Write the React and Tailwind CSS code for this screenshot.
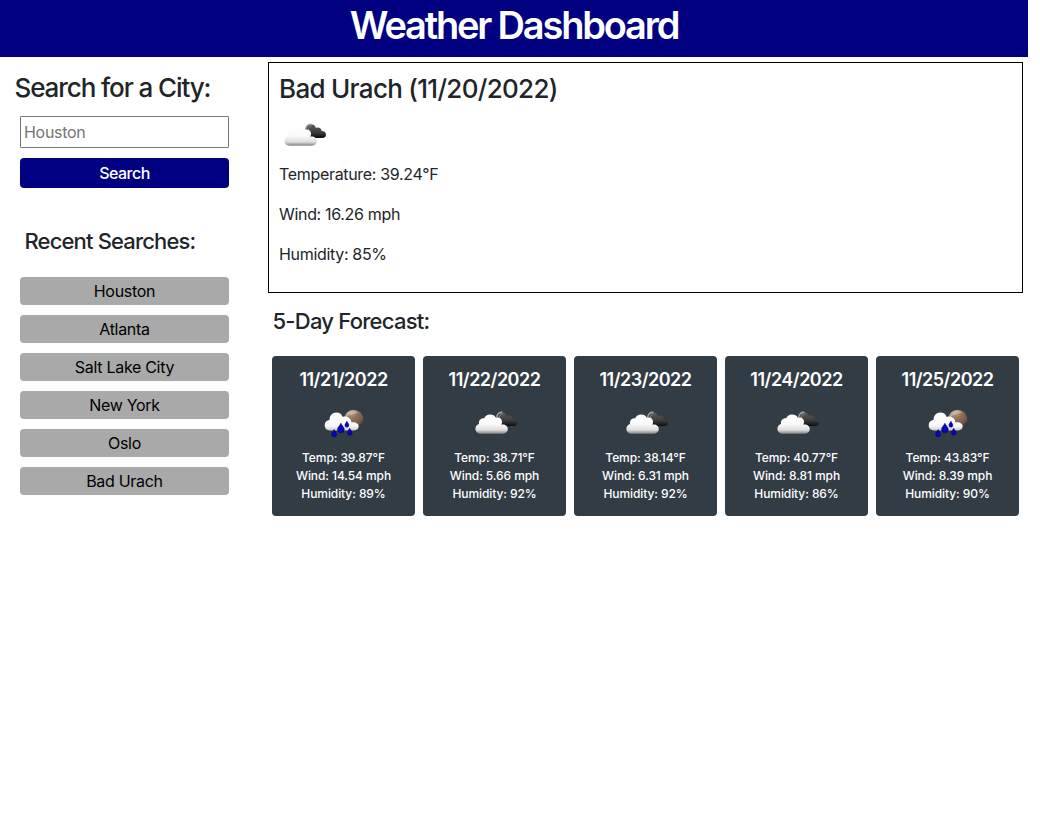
import React from "react";

const searches = ["Houston", "Atlanta", "Salt Lake City", "New York", "Oslo", "Bad Urach"];

const days = [
  { date: "11/21/2022", icon: "rain", temp: "39.87", wind: "14.54", humidity: 89 },
  { date: "11/22/2022", icon: "clouds", temp: "38.71", wind: "5.66", humidity: 92 },
  { date: "11/23/2022", icon: "clouds", temp: "38.14", wind: "6.31", humidity: 92 },
  { date: "11/24/2022", icon: "clouds", temp: "40.77", wind: "8.81", humidity: 86 },
  { date: "11/25/2022", icon: "rain", temp: "43.83", wind: "8.39", humidity: 90 },
];

function CloudsIcon({ id }) {
  return (
    <svg viewBox="0 0 50 50" className="block h-[50px] w-[50px]">
      <defs>
        <linearGradient id={id + "w"} x1="0" y1="0" x2="0" y2="1">
          <stop offset="0" stopColor="#ffffff" />
          <stop offset="0.5" stopColor="#fafafa" />
          <stop offset="0.8" stopColor="#dedede" />
          <stop offset="1" stopColor="#858585" />
        </linearGradient>
        <linearGradient id={id + "d"} x1="0" y1="0" x2="0" y2="1">
          <stop offset="0" stopColor="#5c5c5c" />
          <stop offset="0.6" stopColor="#3c3c3c" />
          <stop offset="1" stopColor="#0c0c0c" />
        </linearGradient>
      </defs>
      <path d="M27 23 C26 18.5 28.5 15.2 32 15.2 C34.6 15.2 36.4 16.8 37.1 18.9 C39.8 17.7 42.4 19.3 42.6 22 C45.4 21.9 47 23.7 47 25.7 C47 27.8 45.4 29 43.4 29 H32 Z" fill={`url(#${id}d)`} />
      <path d="M26.6 20.5 C26.8 17.3 29.2 15 32.4 15.3" fill="none" stroke="#a8a8a8" strokeWidth="1.3" />
      <path d="M29.4 20.6 C29.4 18.4 30.8 17 32.8 17" fill="none" stroke="#8c8c8c" strokeWidth="0.8" />
      <path d="M10.5 36.7 C7.3 36.7 5.4 34.7 5.4 32 C5.4 29.4 6.8 27.6 9 26.9 C8.5 23.4 11 21 14 21.4 C15.2 18.9 17.3 17.5 20 17.5 C22.8 17.5 24.9 18.7 26 20.8 C29.4 19.9 32.2 22 32 25.2 C32 26.2 31.7 27 31.3 27.7 C34.9 27 37.8 29.2 37.8 32.1 C37.8 34.9 35.8 36.7 32.8 36.7 Z" fill={`url(#${id}w)`} />
    </svg>
  );
}

function RainIcon({ id }) {
  return (
    <svg viewBox="0 0 50 50" className="block h-[50px] w-[50px]">
      <defs>
        <radialGradient id={id + "m"} cx="0.38" cy="0.12" r="0.9">
          <stop offset="0" stopColor="#c5aa98" />
          <stop offset="0.35" stopColor="#94745f" />
          <stop offset="0.75" stopColor="#765846" />
          <stop offset="1" stopColor="#3c2a20" />
        </radialGradient>
        <linearGradient id={id + "w"} x1="0" y1="0" x2="0" y2="1">
          <stop offset="0" stopColor="#ffffff" />
          <stop offset="0.75" stopColor="#f8f8f8" />
          <stop offset="1" stopColor="#c8c8c8" />
        </linearGradient>
      </defs>
      <circle cx="34.6" cy="22.4" r="9.6" fill={`url(#${id}m)`} />
      <path d="M26.5 17.9 C29 13.8 35 12.2 39.2 15.5 C36 17 30 17 27.5 20.9 Z" fill="#d7c3b6" opacity="0.6" />
      <path d="M11 33.4 C7.6 33.4 5.7 31 5.7 28.2 C5.7 25.2 7.7 23.2 10.5 23.1 C10.4 18.7 13.5 15.6 17.3 15.6 C20.3 15.6 22.7 17.1 23.7 20 C27.8 18.6 31.9 21 32.4 25.3 C36.6 24.7 39.7 26.5 39.7 29.3 C39.7 31.9 37.8 33.4 34.9 33.4 Z" fill={`url(#${id}w)`} />
      <g fill="#0606b4" stroke="#000073" strokeWidth="0.5">
        <path d="M15.1 32.6 C16 34.4 17.6 35.7 17.6 37.4 A2.5 2.5 0 0 1 12.6 37.4 C12.6 35.7 14.2 34.4 15.1 32.6 Z" />
        <path d="M21.9 26.2 C23 28.6 25.3 30.2 25.3 32.4 A3.4 3.4 0 0 1 18.5 32.4 C18.5 30.2 20.8 28.6 21.9 26.2 Z" />
        <path d="M27.9 24.2 C28.6 25.8 29.9 26.8 29.9 28.2 A2 2 0 0 1 25.9 28.2 C25.9 26.8 27.2 25.8 27.9 24.2 Z" />
        <path d="M30.7 31.3 C31.6 33.1 33.1 34.2 33.1 35.8 A2.4 2.4 0 0 1 28.3 35.8 C28.3 34.2 29.8 33.1 30.7 31.3 Z" />
      </g>
    </svg>
  );
}

export default function App() {
  return (
    <div className="min-h-[813px] bg-white font-['Inter',sans-serif] text-[#212529]">
      <div className="w-[1028px]">
        <header className="flex h-[57px] items-start justify-center bg-[#000080]">
          <h1 className="mt-px text-[38px] leading-[48px] font-semibold tracking-[-2.2px] whitespace-nowrap text-white">Weather Dashboard</h1>
        </header>
        <div className="flex">
          <aside className="w-[268px] pt-[15px]">
            <h2 className="pl-[14.5px] text-[26px] leading-8 font-medium tracking-[-1.1px] whitespace-nowrap">Search for a City:</h2>
            <div className="mt-3 ml-5 flex w-[209px] flex-col">
              <input placeholder="Houston" className="h-8 w-full rounded-[1px] border border-[#767676] px-[3px] text-base tracking-[-0.3px] placeholder:text-[#757575]" />
              <button className="mt-2.5 h-[30px] rounded bg-[#000080] text-base leading-[30px] font-medium tracking-[-0.5px] text-white">Search</button>
            </div>
            <h3 className="mt-[38px] pl-[24.5px] text-[22px] leading-[30px] font-medium tracking-[-0.85px] whitespace-nowrap">Recent Searches:</h3>
            <div className="mt-[21px] ml-5 flex w-[209px] flex-col gap-2.5">
              {searches.map((s) => (
                <button key={s} className="h-7 rounded bg-[#a9a9a9] text-base leading-7 tracking-[-0.3px] text-black">{s}</button>
              ))}
            </div>
          </aside>
          <main className="pt-[5px]">
            <section className="h-[231px] w-[755px] border border-black px-2.5 pt-2.5">
              <h2 className="text-[26px] leading-8 font-medium tracking-[-0.7px] whitespace-nowrap">Bad Urach (11/20/2022)</h2>
              <div className="mt-1"><CloudsIcon id="now" /></div>
              <div className="mt-[3px] flex flex-col gap-4 text-base leading-6 tracking-[-0.32px]">
                <p>Temperature: 39.24°F</p>
                <p>Wind: 16.26 mph</p>
                <p>Humidity: 85%</p>
              </div>
            </section>
            <h3 className="mt-[13px] pl-[4.5px] text-[22px] leading-[30px] font-medium tracking-[-0.75px]">5-Day Forecast:</h3>
            <div className="mt-5 ml-1 flex gap-2">
              {days.map((d, i) => (
                <article key={d.date} className="flex h-40 w-[143px] flex-col items-center rounded bg-[#323c45] pt-3 text-white">
                  <h4 className="text-lg leading-6 font-semibold tracking-[-0.5px]">{d.date}</h4>
                  <div className="mt-[5px]">
                    {d.icon === "rain" ? <RainIcon id={"day" + i} /> : <CloudsIcon id={"day" + i} />}
                  </div>
                  <div className="mt-0.5 text-center text-xs leading-[18px] font-medium tracking-[-0.08px]">
                    <p>Temp: {d.temp}°F</p>
                    <p>Wind: {d.wind} mph</p>
                    <p>Humidity: {d.humidity}%</p>
                  </div>
                </article>
              ))}
            </div>
          </main>
        </div>
      </div>
    </div>
  );
}
